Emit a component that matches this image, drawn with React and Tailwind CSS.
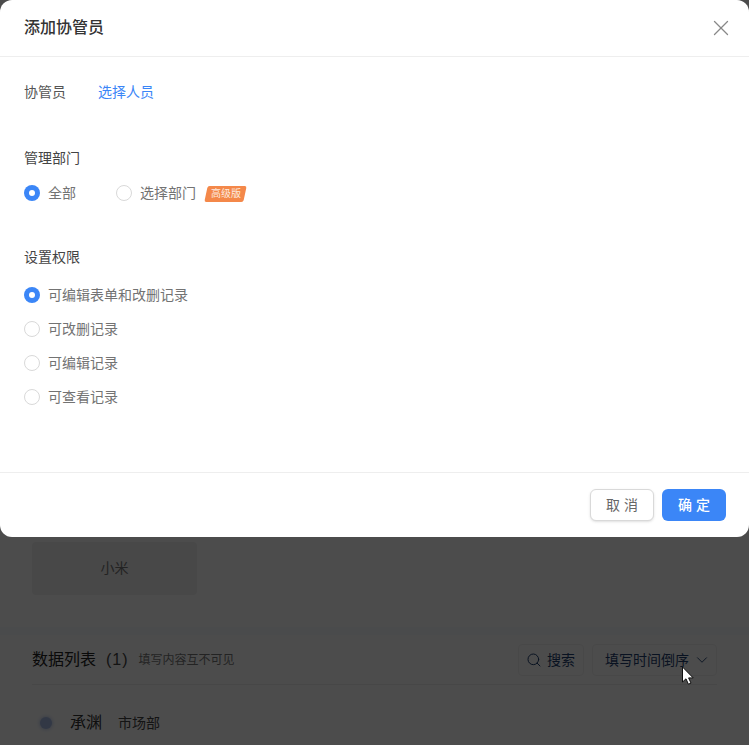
import React from "react";
import { X, Search, ChevronDown } from "lucide-react";

const FONT = "font-['Liberation_Sans','Noto_Sans_CJK_SC',sans-serif]";

const Radio = ({ checked, label }) => (
  <label className="flex items-center">
    {checked ? (
      <span className="flex h-4 w-4 items-center justify-center rounded-full bg-[#3b86f7]">
        <span className="h-1.5 w-1.5 rounded-full bg-white"></span>
      </span>
    ) : (
      <span className="h-4 w-4 rounded-full border border-[#d9d9d9] bg-white"></span>
    )}
    <span className="ml-2 text-sm leading-5 text-[#737373]">{label}</span>
  </label>
);

const permissions = [
  { label: "可编辑表单和改删记录", checked: true },
  { label: "可改删记录" },
  { label: "可编辑记录" },
  { label: "可查看记录" },
];

const App = () => {
  return (
    <div className={`relative h-[745px] w-[749px] overflow-hidden bg-white ${FONT}`}>
      {/* Page behind the dialog */}
      <div className="pt-[542px]">
        <div className="px-8 pb-[32px]">
          <div className="flex h-[53px] w-[165px] items-center justify-center rounded bg-[#f0f0f0] pb-0.5 text-sm text-[#777777]">
            小米
          </div>
        </div>
        <div className="h-2 bg-[#f8fafd]"></div>
        <div className="px-8">
          <div className="flex h-[50px] items-center border-b border-[#eeeeee]">
            <span className="text-base text-[#222222]">数据列表</span>
            <span className="ml-2.5 text-base tracking-[1px] text-[#444444]">(1)</span>
            <span className="ml-2.5 text-xs text-[#777777]">填写内容互不可见</span>
            <div className="ml-auto flex items-center gap-2">
              <div className="flex h-8 w-[66px] items-center gap-[5px] rounded border border-[#f2f2f2] pl-[7px] text-sm text-[#1f3f70]">
                <Search size={16} strokeWidth={1.5} />
                搜索
              </div>
              <div className="flex h-8 w-[125px] items-center gap-1 rounded border border-[#f2f2f2] pl-3 text-sm text-[#1f3f70]">
                填写时间倒序
                <ChevronDown size={18} strokeWidth={1.25} />
              </div>
            </div>
          </div>
          <div className="mt-[26px] flex items-center">
            <span className="ml-2 h-3 w-3 rounded-full bg-[#a9bde8] shadow-[0_0_4px_#a9bde8]"></span>
            <span className="ml-[18px] text-base text-[#333333]">承渊</span>
            <span className="ml-4 text-sm text-[#444444]">市场部</span>
          </div>
        </div>
      </div>

      {/* Mask */}
      <div className="absolute inset-0 bg-black/70"></div>

      {/* Dialog */}
      <div className="absolute left-0 top-0 flex h-[537px] w-[749px] flex-col rounded-xl bg-white">
        <div className="flex h-[57px] items-center justify-between border-b border-[#eeeeee] pl-6 pr-[15px]">
          <h2 className="text-base font-medium text-[#333333]">添加协管员</h2>
          <X size={26} strokeWidth={1.2} className="text-[#888888]" />
        </div>

        <div className="flex-1 px-6">
          <div className="mt-[25px] flex items-center text-sm leading-5">
            <span className="w-[74px] text-[#555555]">协管员</span>
            <span className="text-[#3b86f7]">选择人员</span>
          </div>

          <div className="mt-[46px] text-sm leading-5 text-[#444444]">管理部门</div>
          <div className="mt-[15px] flex items-center">
            <div className="w-[92px]">
              <Radio checked label="全部" />
            </div>
            <Radio label="选择部门" />
            <span className="ml-[10px] mt-0.5 flex h-4 w-[39px] -skew-x-12 items-center justify-center rounded-[2px] bg-[#f4884a]">
              <span className="skew-x-12 text-[10px] leading-none text-[#fdeadf]">高级版</span>
            </span>
          </div>

          <div className="mt-[44px] text-sm leading-5 text-[#444444]">设置权限</div>
          <div className="mt-[18px] flex flex-col gap-[14px]">
            {permissions.map((item) => (
              <Radio key={item.label} checked={item.checked} label={item.label} />
            ))}
          </div>
        </div>

        <div className="flex h-[65px] items-center justify-end gap-2 border-t border-[#eeeeee] pr-[23px]">
          <button className="h-8 w-16 rounded-md border border-[#d9d9d9] bg-white pl-[4px] text-sm tracking-[4px] text-[#666666] shadow-sm">
            取消
          </button>
          <button className="h-8 w-16 rounded-md bg-[#3b86f7] pl-[4px] text-sm font-medium tracking-[4px] text-white">
            确定
          </button>
        </div>
      </div>

      {/* Mouse cursor */}
      <svg className="absolute left-[681px] top-[666px]" width="14" height="20" viewBox="0 0 14 20">
        <path d="M1.5 1v15l3.5-3.2 2.4 5.4 2.6-1.1-2.4-5.2h4.6z" fill="#fff" stroke="#111" strokeWidth="1" />
      </svg>
    </div>
  );
};

export default App;
